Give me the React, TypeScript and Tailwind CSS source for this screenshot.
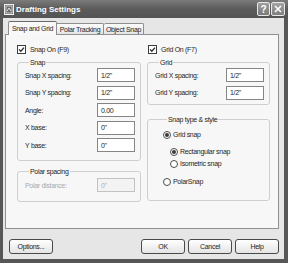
const Check = () => (
  <span className="w-[9px] h-[9px] border border-[#3c3c3c] bg-white flex items-center justify-center shrink-0">
    <svg width="7" height="7" viewBox="0 0 7 7">
      <path d="M1 3.4 L2.8 5.2 L6 1.6" fill="none" stroke="#2a2a2a" strokeWidth="1.3" />
    </svg>
  </span>
);

const Radio = ({ on }: { on?: boolean }) => (
  <span className="w-[8px] h-[8px] rounded-full border border-[#4e4e4e] bg-white flex items-center justify-center shrink-0">
    {on && <span className="w-[4px] h-[4px] rounded-full bg-[#3a3a3a]" />}
  </span>
);

const Field = ({ label, value, disabled }: { label: string; value: string; disabled?: boolean }) => (
  <div className="flex items-center justify-between h-[14px]">
    <span className={disabled ? 'text-[#a9a9a9]' : ''}>{label}</span>
    <span
      className={
        'w-[38px] h-[14px] border pl-[3px] flex items-center ' +
        (disabled ? 'border-[#c2c2c2] bg-[#f3f3f3] text-[#b0b0b0]' : 'border-[#858585] bg-white')
      }
    >
      {value}
    </span>
  </div>
);

const Group = ({ title, className, children }: { title: string; className: string; children: React.ReactNode }) => (
  <fieldset className={'border border-[#cfcfcf] rounded-[3px] ' + className}>
    <legend className="ml-[4px] px-[1px] leading-[9px]">{title}</legend>
    {children}
  </fieldset>
);

const Button = ({ label }: { label: string }) => (
  <div className="w-[44px] h-[15px] border border-[#4a4a4a] rounded-[3px] bg-gradient-to-b from-white to-[#e4e4e4] flex items-center justify-center">
    {label}
  </div>
);

export default function App() {
  return (
    <div className="w-[288px] h-[263px] bg-[#575757] flex flex-col overflow-hidden font-['Liberation_Sans',Arial,sans-serif] text-[7px] tracking-[-0.3px] leading-[9px] text-[#1e1e1e]">
      {/* title bar */}
      <div className="h-[18px] shrink-0 flex items-center bg-gradient-to-b from-[#7c7c7c] via-[#5b5b5b] to-[#545454] pl-[4px] pr-[3px]">
        <svg width="10" height="11" viewBox="0 0 10 11">
          <rect x="0.5" y="0.5" width="9" height="10" fill="#6a6a6a" stroke="#f0f0f0" />
          <rect x="2" y="2" width="6" height="7" fill="none" stroke="#e0e0e0" strokeWidth="0.8" />
          <path d="M3 7 L5 4 L7 7" fill="none" stroke="#ffffff" strokeWidth="0.8" />
        </svg>
        <span className="ml-[2px] text-white font-bold text-[8px] tracking-normal">Drafting Settings</span>
        <div className="ml-auto flex gap-[1px]">
          <div className="w-[13px] h-[14px] rounded-[2px] border border-[#e8e8e8] bg-gradient-to-b from-[#a0a0a0] to-[#7a7a7a] flex items-center justify-center text-white font-bold text-[10px] tracking-normal">
            ?
          </div>
          <div className="w-[14px] h-[14px] rounded-[2px] border border-[#e8e8e8] bg-gradient-to-b from-[#a4a4a4] to-[#7e7e7e] flex items-center justify-center">
            <svg width="8" height="8" viewBox="0 0 8 8">
              <path d="M1 1 L7 7 M7 1 L1 7" stroke="#ffffff" strokeWidth="1.6" />
            </svg>
          </div>
        </div>
      </div>

      {/* body */}
      <div className="ml-[3px] mr-[4px] mb-[4px] flex-1 bg-[#e6e6e6] flex flex-col">
        {/* tabs */}
        <div className="flex items-end h-[16px] pl-[5px] relative z-10">
          <div className="w-[49px] h-[14px] mb-[-1px] border border-b-0 border-[#8e8e8e] border-t-[#6a6a6a] rounded-t-[2px] bg-[#f8f8f8] flex items-center justify-center">
            Snap and Grid
          </div>
          <div className="w-[47px] h-[11px] border border-b-0 border-l-0 border-[#8e8e8e] rounded-tr-[2px] bg-gradient-to-b from-[#fbfbfb] to-[#e4e4e4] flex items-center justify-center">
            Polar Tracking
          </div>
          <div className="w-[40px] h-[11px] border border-b-0 border-l-0 border-[#8e8e8e] rounded-t-[2px] bg-gradient-to-b from-[#fbfbfb] to-[#e4e4e4] flex items-center justify-center">
            Object Snap
          </div>
        </div>

        {/* panel */}
        <div className="ml-[2px] mr-[5px] h-[195px] border border-[#919191] bg-[#f7f7f7] pt-[9px] pl-[11px] flex gap-[6px]">
          {/* left column */}
          <div className="w-[124px] flex flex-col">
            <div className="h-[10px] flex items-center gap-[4px]">
              <Check />
              <span>Snap On (F9)</span>
            </div>
            <Group title="Snap" className="mt-[4px] pl-[7px] pr-[5px] pt-[1px] pb-[8px]">
              <div className="flex flex-col gap-[3.5px]">
                <Field label="Snap X spacing:" value={'1/2"'} />
                <Field label="Snap Y spacing:" value={'1/2"'} />
                <Field label="Angle:" value="0.00" />
                <Field label="X base:" value={'0"'} />
                <Field label="Y base:" value={'0"'} />
              </div>
            </Group>
            <Group title="Polar spacing" className="mt-[5.5px] pl-[7px] pr-[5px] pt-[2.5px] pb-[9px]">
              <Field label="Polar distance:" value={'0"'} disabled />
            </Group>
          </div>

          {/* right column */}
          <div className="w-[123px] flex flex-col">
            <div className="h-[10px] flex items-center gap-[4px] pl-[1px]">
              <Check />
              <span>Grid On (F7)</span>
            </div>
            <Group title="Grid" className="mt-[4px] pl-[7px] pr-[5px] pt-[1px] pb-[4px]">
              <div className="flex flex-col gap-[3.5px]">
                <Field label="Grid X spacing:" value={'1/2"'} />
                <Field label="Grid Y spacing:" value={'1/2"'} />
              </div>
            </Group>
            <Group title="Snap type & style" className="mt-[10.5px] pl-[15px] pt-[6px] pb-[13.5px]">
              <div className="flex flex-col">
                <div className="h-[9px] flex items-center gap-[2px]">
                  <Radio on />
                  <span>Grid snap</span>
                </div>
                <div className="h-[9px] mt-[8px] ml-[7px] flex items-center gap-[2px]">
                  <Radio on />
                  <span>Rectangular snap</span>
                </div>
                <div className="h-[9px] mt-[3px] ml-[7px] flex items-center gap-[2px]">
                  <Radio />
                  <span>Isometric snap</span>
                </div>
                <div className="h-[9px] mt-[9px] flex items-center gap-[2px]">
                  <Radio />
                  <span>PolarSnap</span>
                </div>
              </div>
            </Group>
          </div>
        </div>

        {/* buttons */}
        <div className="mt-[10px] pl-[6px] pr-[5px] flex items-center">
          <Button label="Options..." />
          <div className="ml-auto flex gap-[3px]">
            <Button label="OK" />
            <Button label="Cancel" />
            <Button label="Help" />
          </div>
        </div>
      </div>
    </div>
  );
}
